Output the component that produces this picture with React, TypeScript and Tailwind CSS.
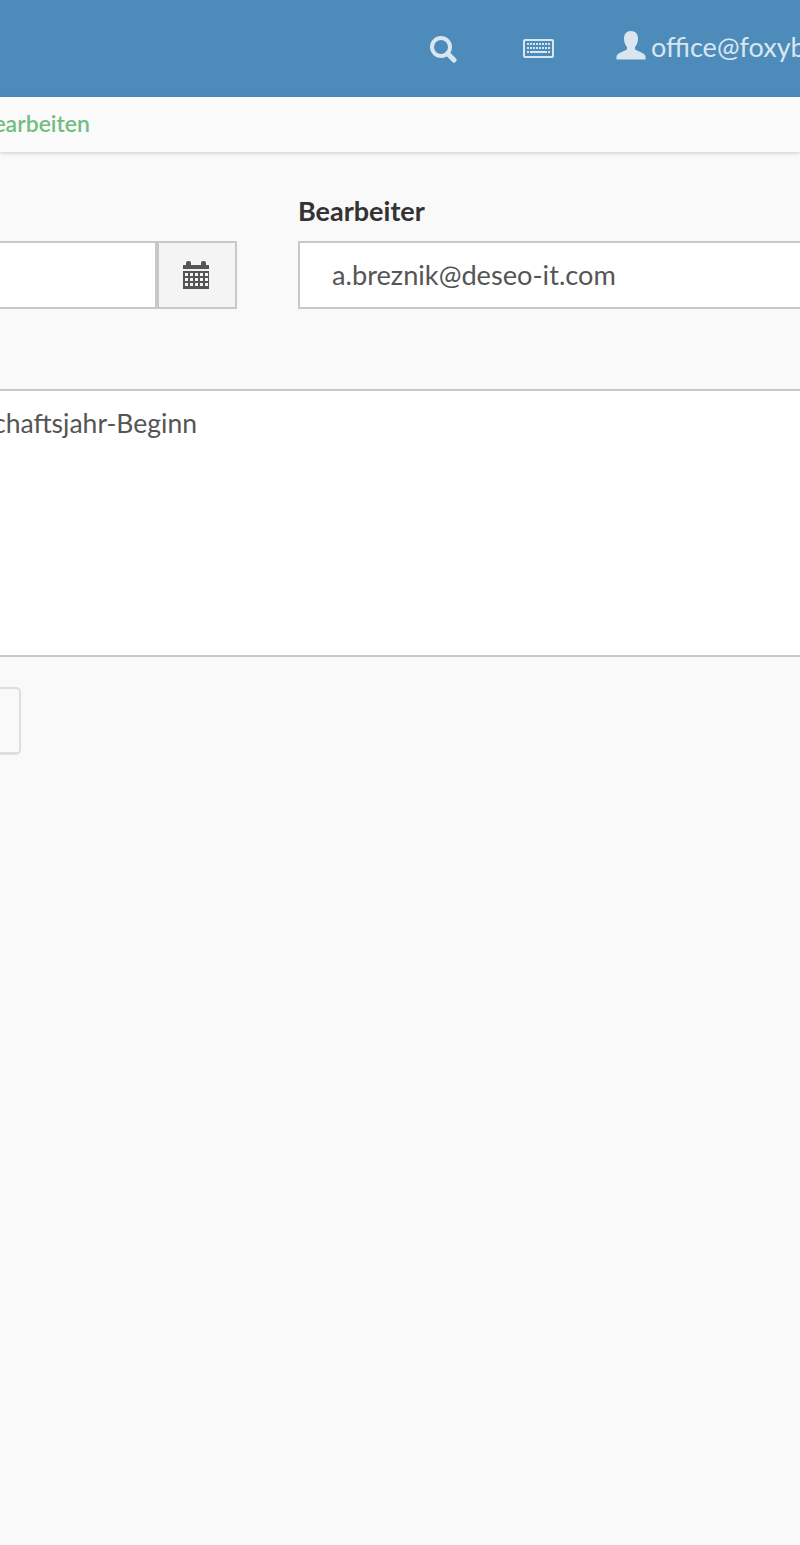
import React from 'react';

const SearchIcon = () => (
  <svg width="28" height="28" viewBox="0 0 28 28" fill="none" className="shrink-0">
    <circle cx="12" cy="12" r="9" stroke="#d9e6f0" strokeWidth="4" />
    <path d="M18.5 18.5 L25 25" stroke="#d9e6f0" strokeWidth="5" strokeLinecap="round" />
  </svg>
);

const KeyboardIcon = () => (
  <svg width="31" height="19" viewBox="0 0 31 19" className="shrink-0">
    <rect x="1" y="1" width="29" height="17" rx="1" fill="none" stroke="#d9e6f0" strokeWidth="2" />
    <g fill="#d9e6f0">
      {[4, 7, 10, 13, 16, 19, 22, 25].map(x => <rect key={x} x={x} y="4" width="2" height="2" />)}
      {[4, 7, 10, 13, 16, 19, 22, 25].map(x => <rect key={x} x={x} y="8" width="2" height="2" />)}
      <rect x="4" y="12" width="2" height="2" />
      <rect x="7" y="12" width="17" height="2" />
      <rect x="25" y="12" width="2" height="2" />
    </g>
  </svg>
);

const UserIcon = () => (
  <svg width="30" height="29" viewBox="0 0 30 29" className="shrink-0">
    <path
      fill="#d9e6f0"
      d="M15 0 C19.5 0 22 3 22 7.5 C22 11.5 20.5 14.5 19 16 L19 18.5 C21 20 29.5 22 29.5 25.5 L29.5 28.5 L0.5 28.5 L0.5 25.5 C0.5 22 9 20 11 18.5 L11 16 C9.5 14.5 8 11.5 8 7.5 C8 3 10.5 0 15 0 Z"
    />
  </svg>
);

const CalendarIcon = () => (
  <svg width="26" height="28" viewBox="0 0 26 28" className="shrink-0">
    <path fill="#555555" d="M0 4 H3 V2 Q3 0 5 0 H6 Q8 0 8 2 V4 H18 V2 Q18 0 20 0 H21 Q23 0 23 2 V4 H26 V8 H0 Z" />
    <rect x="0" y="10" width="26" height="18" fill="#555555" />
    <g fill="#f4f4f4">
      {[12, 17, 22].flatMap(y =>
        [2, 7, 12, 17, 22].map(x => <rect key={`${x}-${y}`} x={x} y={y} width="3" height="3" />)
      )}
    </g>
  </svg>
);

export default function App() {
  return (
    <div className="min-h-[1545px] w-[800px] overflow-hidden bg-[#f9f9f9] font-['Lato','Noto_Sans',sans-serif] text-[#555555]">
      <header className="flex h-[97px] items-center overflow-hidden bg-[#4d8cba] pl-[429px] text-[#d9e6f0]">
        <SearchIcon />
        <div className="ml-[66px]"><KeyboardIcon /></div>
        <div className="mb-[6px] ml-[62px]"><UserIcon /></div>
        <span className="mb-[2px] ml-[5px] whitespace-nowrap text-[27px]">office@foxyb</span>
      </header>

      <nav className="flex h-[55px] items-center bg-[#fbfbfb] pb-[2px] shadow-[0_1px_4px_rgba(0,0,0,0.18)]">
        <div className="flex w-[90px] justify-end overflow-hidden">
          <span className="whitespace-nowrap text-[23px] font-semibold text-[#72bd7f]">Bearbeiten</span>
        </div>
      </nav>

      <section className="flex gap-[61px] pt-[43px]">
        <div className="flex h-[68px] w-[237px] shrink-0 self-end">
          <div className="w-[159px] border-y-2 border-r-4 border-[#c8c8c8] bg-white" />
          <div className="flex w-[78px] items-center justify-center border-y-2 border-r-2 border-[#c8c8c8] bg-[#f4f4f4] pr-[2px] pb-[1px]">
            <CalendarIcon />
          </div>
        </div>
        <div className="min-w-0 flex-1">
          <label className="block h-[46px] text-[27px] leading-[32px] font-bold text-[#333333]">Bearbeiter</label>
          <div className="flex h-[68px] items-center border-y-2 border-l-2 border-[#c8c8c8] bg-white pl-[32px] text-[27.2px]">
            a.breznik@deseo-it.com
          </div>
        </div>
      </section>

      <div className="mt-[80px] h-[268px] border-y-2 border-[#c8c8c8] bg-white pt-[15px]">
        <div className="flex w-[197px] justify-end overflow-hidden">
          <span className="whitespace-nowrap text-[26.5px] leading-[34px]">Wirtschaftsjahr-Beginn</span>
        </div>
      </div>

      <div className="mt-[30px] h-[68px] w-[21px] rounded-r-[5px] border-y-2 border-r-2 border-[#dddddd] border-b-[3px] bg-[#f9f9f9]" />
    </div>
  );
}
